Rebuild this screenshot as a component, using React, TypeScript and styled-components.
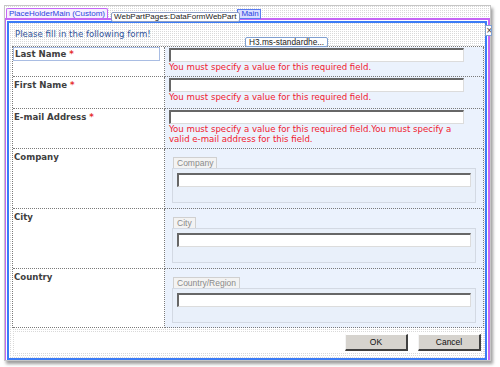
import styled, { createGlobalStyle } from "styled-components";

const GlobalStyle = createGlobalStyle`
  html, body {
    margin: 0;
    padding: 0;
    background: #fff;
  }
  body {
    width: 500px;
    height: 367px;
    overflow: hidden;
    font-family: "DejaVu Sans", Verdana, sans-serif;
  }
  * {
    box-sizing: border-box;
  }
`;

const dots = `conic-gradient(#d9d9d9 0 25%, #fff 0) 0 0 / 2px 2px`;

type Field = {
  label: string;
  required?: boolean;
  selected?: boolean;
  errors?: string[];
  group?: string;
  height: number;
};

const fields: Field[] = [
  {
    label: "Last Name",
    required: true,
    selected: true,
    errors: ["You must specify a value for this required field."],
    height: 30,
  },
  {
    label: "First Name",
    required: true,
    errors: ["You must specify a value for this required field."],
    height: 32,
  },
  {
    label: "E-mail Address",
    required: true,
    errors: [
      "You must specify a value for this required field.You must specify a",
      "valid e-mail address for this field.",
    ],
    height: 40,
  },
  { label: "Company", group: "Company", height: 60 },
  { label: "City", group: "City", height: 60 },
  { label: "Country", group: "Country/Region", height: 59 },
];

export default function App() {
  return (
    <>
      <GlobalStyle />
      <Screen>
        <Window>
          <TabStrip>
            <PlaceholderTab>PlaceHolderMain (Custom)</PlaceholderTab>
            <WebPartTab>WebPartPages:DataFormWebPart</WebPartTab>
            <MainTab>Main</MainTab>
          </TabStrip>
          <PlaceholderArea>
            <WebPartBox>
              <CloseTag>×</CloseTag>
              <Header>
                <Intro>Please fill in the following form!</Intro>
                <ElementTag>H3.ms-standardhe...</ElementTag>
              </Header>
              <FormTable>
                {fields.map((f) => (
                  <Row key={f.label} $h={f.height}>
                    <LabelCell>
                      <Label $selected={f.selected}>
                        {f.label}
                        {f.required && <Star> *</Star>}
                      </Label>
                    </LabelCell>
                    {f.group ? (
                      <GroupCell>
                        <GroupTab>{f.group}</GroupTab>
                        <GroupBox>
                          <TextBox $full />
                        </GroupBox>
                      </GroupCell>
                    ) : (
                      <ValueCell>
                        <TextBox />
                        <ErrorText>
                          {f.errors?.map((e, i) => (
                            <span key={i}>
                              {i > 0 && <br />}
                              {e}
                            </span>
                          ))}
                        </ErrorText>
                      </ValueCell>
                    )}
                  </Row>
                ))}
              </FormTable>
              <ButtonBar>
                <ButtonRow>
                  <FormButton>OK</FormButton>
                  <FormButton>Cancel</FormButton>
                </ButtonRow>
              </ButtonBar>
            </WebPartBox>
          </PlaceholderArea>
        </Window>
      </Screen>
    </>
  );
}

const Screen = styled.div`
  width: 500px;
  height: 367px;
  padding: 5px 0 0 4px;
`;

const Window = styled.div`
  width: 487px;
  height: 356px;
  border: 1px solid #c6c6c6;
  background: #fff;
  box-shadow: 2px 3px 3px rgba(0, 0, 0, 0.38);
  display: flex;
  flex-direction: column;
`;

const TabStrip = styled.div`
  height: 12px;
  display: flex;
  align-items: flex-end;
  background: ${dots};
  font-family: "Liberation Sans", Tahoma, sans-serif;
  white-space: nowrap;
`;

const PlaceholderTab = styled.div`
  height: 10px;
  line-height: 9px;
  margin-left: 1px;
  padding: 0 2px;
  border: 1px solid #c566f5;
  border-bottom: none;
  border-radius: 2px 2px 0 0;
  background: #f6f0ff;
  font-size: 8px;
  color: #2b3fe0;
`;

const WebPartTab = styled.div`
  position: relative;
  z-index: 2;
  height: 10px;
  line-height: 8px;
  margin: 0 0 -4px 3px;
  padding: 0 3px 0 2px;
  border: 1px solid #8a9cc4;
  border-radius: 2px;
  background: #fff;
  font-size: 8px;
  color: #222;
`;

const MainTab = styled.div`
  position: relative;
  z-index: 1;
  height: 10px;
  line-height: 8px;
  margin: 0 0 -1px -3px;
  padding: 0 1px 0 3px;
  border: 1px solid #5a7cf0;
  background: #d7ddff;
  font-size: 8px;
  color: #2b3fe0;
`;

const PlaceholderArea = styled.div`
  flex: 1;
  display: flex;
  padding: 1px 1px 0 1px;
  border-top: 2px solid #c566f5;
  border-left: 1px solid #c566f5;
  border-right: 2px solid #c566f5;
`;

const WebPartBox = styled.div`
  position: relative;
  flex: 1;
  display: flex;
  flex-direction: column;
  border: 2px solid #3b7bf6;
  background: ${dots};
`;

const CloseTag = styled.div`
  position: absolute;
  top: 2px;
  right: -7px;
  width: 7px;
  height: 11px;
  border: 1px solid #7f9fd0;
  background: #fff;
  font-size: 8px;
  line-height: 9px;
  color: #333;
  text-align: center;
  overflow: hidden;
  z-index: 3;
`;

const Header = styled.div`
  position: relative;
  height: 23px;
  padding: 5px 0 0 6px;
`;

const Intro = styled.h3`
  margin: 0;
  font-size: 8.6px;
  font-weight: normal;
  line-height: 12px;
  color: #33569c;
`;

const ElementTag = styled.div`
  position: absolute;
  z-index: 2;
  left: 236px;
  top: 14px;
  height: 10px;
  padding: 0 3px;
  border: 1px solid #7f9fd0;
  border-radius: 2px;
  background: #fff;
  font-family: "Liberation Sans", Tahoma, sans-serif;
  font-size: 8.3px;
  line-height: 8px;
  color: #222;
  white-space: nowrap;
`;

const FormTable = styled.div`
  margin: 0 1px 0 3px;
  border-top: 1px dotted #7a7a7a;
  border-left: 1px dotted #7a7a7a;
  background: #fff;
`;

const Row = styled.div<{ $h: number }>`
  display: grid;
  grid-template-columns: 152px 1fr;
  grid-template-rows: ${(p) => p.$h}px;
  overflow: hidden;
`;

const LabelCell = styled.div`
  border-right: 1px dotted #7a7a7a;
  border-bottom: 1px dotted #7a7a7a;
  padding-right: 4px;
  background: #fff;
`;

const Label = styled.div<{ $selected?: boolean }>`
  font-size: 8.6px;
  font-weight: bold;
  line-height: 12px;
  color: #404040;
  padding: ${(p) => (p.$selected ? "0 1px" : "2px 1px 0")};
  border: ${(p) => (p.$selected ? "1px solid #a9bde3" : "none")};
  white-space: nowrap;
`;

const Star = styled.span`
  color: #e52d2d;
`;

const ValueCell = styled.div`
  border-right: 1px dotted #7a7a7a;
  border-bottom: 1px dotted #7a7a7a;
  background: #ebf2fd;
  padding: 1px 0 0 4px;
`;

const GroupCell = styled(ValueCell)`
  display: flex;
  flex-direction: column;
  align-items: flex-start;
  padding: 8px 7px 0 7px;
`;

const TextBox = styled.div<{ $full?: boolean }>`
  width: ${(p) => (p.$full ? "100%" : "295px")};
  height: 14px;
  background: #fff;
  border-top: 2px solid #676767;
  border-left: 2px solid #676767;
  border-right: 1px solid #dcdcdc;
  border-bottom: 1px solid #dcdcdc;
`;

const ErrorText = styled.div`
  font-size: 8.6px;
  line-height: 10px;
  color: #f0202e;
  white-space: nowrap;
`;

const GroupTab = styled.div`
  height: 11px;
  margin-left: 1px;
  padding: 0 3px;
  border: 1px solid #d0d0d0;
  border-bottom: none;
  background: #f3f3f3;
  font-family: "Liberation Sans", Tahoma, sans-serif;
  font-size: 8.5px;
  line-height: 10px;
  color: #8a8a8a;
`;

const GroupBox = styled.div`
  align-self: stretch;
  height: 35px;
  padding: 4px;
  border: 1px solid #d3d9e3;
  background: #e9f0fa;
`;

const ButtonBar = styled.div`
  margin: 1px 1px 0 3px;
  padding: 3px;
  background: ${dots};
`;

const ButtonRow = styled.div`
  display: flex;
  justify-content: flex-end;
  gap: 10px;
  padding: 2px 0;
  background: #fff;
`;

const FormButton = styled.button`
  width: 63px;
  height: 17px;
  padding: 0;
  background: #d6d3ce;
  border-top: 1px solid #fff;
  border-left: 1px solid #f4f4f4;
  border-right: 2px solid #404040;
  border-bottom: 2px solid #404040;
  font-family: "Liberation Sans", Tahoma, sans-serif;
  font-size: 8.5px;
  color: #111;
`;
